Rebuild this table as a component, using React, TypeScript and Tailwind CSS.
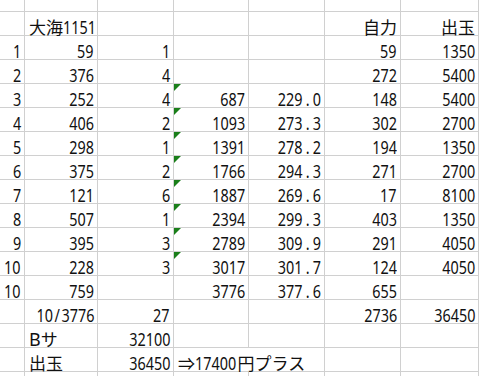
import React from 'react';

type Row = {
  cells: string[];
  flag?: boolean;
};

const rows: Row[] = [
  { cells: ['1', '59', '1', '', '', '59', '1350'] },
  { cells: ['2', '376', '4', '', '', '272', '5400'] },
  { cells: ['3', '252', '4', '687', '229.0', '148', '5400'], flag: true },
  { cells: ['4', '406', '2', '1093', '273.3', '302', '2700'], flag: true },
  { cells: ['5', '298', '1', '1391', '278.2', '194', '1350'], flag: true },
  { cells: ['6', '375', '2', '1766', '294.3', '271', '2700'], flag: true },
  { cells: ['7', '121', '6', '1887', '269.6', '17', '8100'], flag: true },
  { cells: ['8', '507', '1', '2394', '299.3', '403', '1350'], flag: true },
  { cells: ['9', '395', '3', '2789', '309.9', '291', '4050'], flag: true },
  { cells: ['10', '228', '3', '3017', '301.7', '124', '4050'], flag: true },
  { cells: ['10', '759', '', '3776', '377.6', '655', ''] },
  { cells: ['', '10/3776', '27', '', '', '2736', '36450'] },
];

// narrow digits like the sheet's UI font
function Num({ text, left, className = '' }: { text: string; left?: boolean; className?: string }) {
  const parts = text.split(/([./])/);
  return (
    <span className={`inline-block scale-x-[0.8] ${left ? 'origin-left' : 'origin-right'} ${className}`}>
      {parts.map((p, i) =>
        p === '.' || p === '/' ? (
          <span key={i} className={p === '.' ? 'px-[4px]' : 'px-[2px]'}>
            {p}
          </span>
        ) : (
          p
        )
      )}
    </span>
  );
}

function Jp({ children }: { children: React.ReactNode }) {
  return (
    <span className="text-[17px]" style={{ fontFamily: '"Noto Sans CJK JP", sans-serif' }}>
      {children}
    </span>
  );
}

function Cell({
  children,
  left,
  flag,
  short,
  className = '',
}: {
  children?: React.ReactNode;
  left?: boolean;
  flag?: boolean;
  short?: boolean;
  className?: string;
}) {
  return (
    <div
      className={`relative ${short ? 'h-[12px]' : 'h-[24px]'} border-r border-b border-[#d0d0d0] flex items-end leading-[16px] whitespace-nowrap ${
        left ? 'justify-start pl-[4px]' : 'justify-end pr-[3px]'
      } ${className}`}
    >
      {flag && (
        <span className="absolute left-0 top-0 w-0 h-0 border-solid border-t-[7px] border-r-[7px] border-t-[#1a7f1a] border-r-transparent" />
      )}
      {children}
    </div>
  );
}

export default function App() {
  return (
    <div
      className="w-[479px] h-[376px] overflow-hidden bg-white text-[18px] text-[#111]"
      style={{ fontFamily: '"Noto Sans", "Noto Sans CJK JP", sans-serif' }}
    >
      <div className="grid w-max grid-cols-[25px_73px_76px_75px_76px_76px_78px]">
        {/* top partial row */}
        {Array.from({ length: 7 }).map((_, i) => (
          <Cell key={`h${i}`} short />
        ))}

        {/* title row */}
        <Cell />
        <Cell left>
          <Jp>大海</Jp>
          <Num text="1151" left />
        </Cell>
        <Cell />
        <Cell />
        <Cell />
        <Cell>
          <Jp>自力</Jp>
        </Cell>
        <Cell>
          <Jp>出玉</Jp>
        </Cell>

        {rows.map((r, ri) =>
          r.cells.map((c, ci) => (
            <Cell key={`${ri}-${ci}`} flag={r.flag && ci === 3}>
              {c && <Num text={c} />}
            </Cell>
          ))
        )}

        {/* Bサ row */}
        <Cell />
        <Cell left>
          B<Jp>サ</Jp>
        </Cell>
        <Cell>
          <Num text="32100" />
        </Cell>
        <Cell />
        <Cell />
        <Cell />
        <Cell />

        {/* 出玉 row */}
        <Cell />
        <Cell left>
          <Jp>出玉</Jp>
        </Cell>
        <Cell>
          <Num text="36450" />
        </Cell>
        <Cell left className="col-span-2">
          <Jp>⇒</Jp>
          <Num text="17400" left className="-mr-[9px]" />
          <Jp>円プラス</Jp>
        </Cell>
        <Cell />
        <Cell />

        {/* trailing row */}
        {Array.from({ length: 7 }).map((_, i) => (
          <Cell key={`t${i}`} />
        ))}
      </div>
    </div>
  );
}
